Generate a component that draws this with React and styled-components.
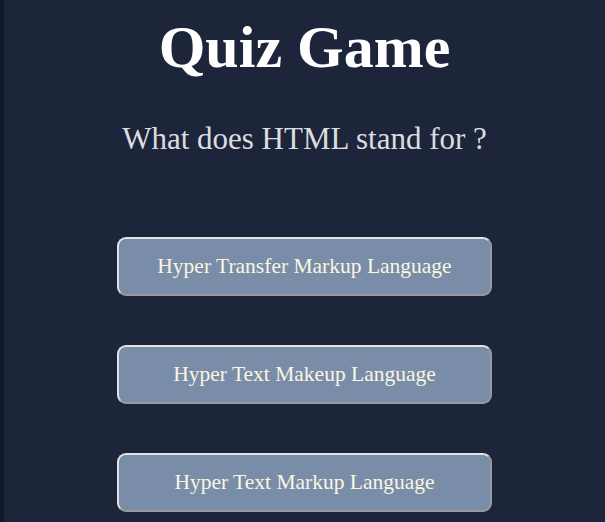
import React from 'react'
import styled, { createGlobalStyle } from 'styled-components'

const GlobalStyle = createGlobalStyle`
  html, body {
    margin: 0;
    padding: 0;
    background: #1c2539;
  }
  body {
    font-family: "Liberation Serif", "Times New Roman", serif;
  }
`

const Page = styled.div`
  min-height: 522px;
  border-left: 4px solid #101a2b;
  display: flex;
  flex-direction: column;
  align-items: center;
  box-sizing: border-box;
`

const Title = styled.h1`
  margin: 13px 0 0;
  font-size: 60px;
  font-weight: bold;
  color: #ffffff;
`

const Question = styled.h2`
  margin: 39px 0 0;
  font-size: 31px;
  font-weight: normal;
  color: #dcdde0;
`

const Options = styled.div`
  margin-top: 80px;
  display: flex;
  flex-direction: column;
  gap: 49px;
`

const Option = styled.button`
  width: 375px;
  height: 59px;
  border-radius: 9px;
  border: 2px solid;
  border-color: #e2e2e2 #9a9a9a #9a9a9a #e2e2e2;
  background: #7a8da8;
  color: #fbf6e2;
  font-family: "Liberation Serif", "Times New Roman", serif;
  font-size: 21.5px;
  cursor: pointer;
`

const answers = [
  'Hyper Transfer Markup Language',
  'Hyper Text Makeup Language',
  'Hyper Text Markup Language',
]

export default function App() {
  return (
    <>
      <GlobalStyle />
      <Page>
        <Title>Quiz Game</Title>
        <Question>What does HTML stand for ?</Question>
        <Options>
          {answers.map((a) => (
            <Option key={a}>{a}</Option>
          ))}
        </Options>
      </Page>
    </>
  )
}
